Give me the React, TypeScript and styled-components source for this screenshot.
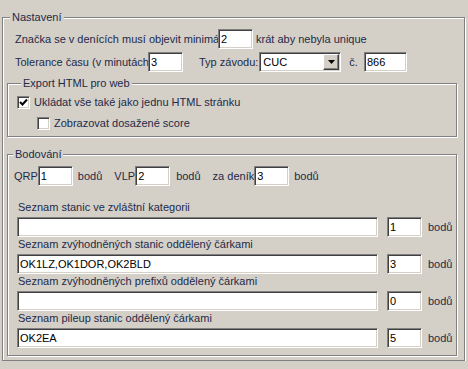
import styled, { createGlobalStyle } from 'styled-components';

const GlobalStyle = createGlobalStyle`
  html, body {
    margin: 0;
    background: #d4d0c8;
  }
  body {
    font-family: 'Liberation Sans', Arial, sans-serif;
    font-size: 11px;
    color: #1e2a48;
  }
`;

const Group = styled.fieldset<{ $mt?: number; $pad: string }>`
  margin: ${(p) => p.$mt ?? 0}px 0 0 0;
  padding: ${(p) => p.$pad};
  border: 1px solid #808080;
  box-shadow: inset 1px 1px 0 #fff, 1px 1px 0 #fff;
  min-width: 0;
`;

const Outer = styled(Group)`
  margin: 10px 3px 0 2px;
`;

const Legend = styled.legend<{ $ml: number }>`
  margin-left: ${(p) => p.$ml}px;
  padding: 0 2px;
  line-height: 14px;
  background: #d4d0c8;
`;

const Row = styled.div<{ $mt?: number; $pl?: number }>`
  display: flex;
  align-items: center;
  height: 20px;
  margin-top: ${(p) => p.$mt ?? 0}px;
  padding-left: ${(p) => p.$pl ?? 0}px;
  white-space: nowrap;
`;

// fixed-width label column; the original dialog cuts the label at the field
const Clip = styled.span<{ $w: number }>`
  display: block;
  width: ${(p) => p.$w}px;
  white-space: nowrap;
`;

const Text = styled.span<{ $ml?: number }>`
  margin-left: ${(p) => p.$ml ?? 0}px;
`;

const Field = styled.input<{ $w: number; $ml?: number }>`
  box-sizing: border-box;
  width: ${(p) => p.$w}px;
  height: 20px;
  margin: 0 0 0 ${(p) => p.$ml ?? 0}px;
  padding: 0 2px;
  background: #fff;
  border-style: solid;
  border-width: 1px;
  border-color: #808080 #fff #fff #808080;
  box-shadow: inset 1px 1px 0 #404040, inset -1px -1px 0 #d4d0c8;
  font-family: 'Liberation Sans', Arial, sans-serif;
  font-size: 11px;
  color: #000;
  outline: none;
`;

const Combo = styled.div<{ $w: number; $ml: number }>`
  box-sizing: border-box;
  display: flex;
  align-items: center;
  justify-content: space-between;
  width: ${(p) => p.$w}px;
  height: 20px;
  margin-left: ${(p) => p.$ml}px;
  padding: 0 1px 0 3px;
  background: #fff;
  border-style: solid;
  border-width: 1px;
  border-color: #808080 #fff #fff #808080;
  box-shadow: inset 1px 1px 0 #404040, inset -1px -1px 0 #d4d0c8;
  color: #000;
`;

const ComboButton = styled.div`
  box-sizing: border-box;
  display: flex;
  align-items: center;
  justify-content: center;
  width: 16px;
  height: 16px;
  background: #d4d0c8;
  border-style: solid;
  border-width: 1px;
  border-color: #fff #404040 #404040 #fff;
  box-shadow: inset -1px -1px 0 #808080;
`;

const CheckRow = styled.label<{ $indent: number; $mt?: number }>`
  display: flex;
  align-items: center;
  gap: 4px;
  height: 16px;
  margin: ${(p) => p.$mt ?? 0}px 0 0 ${(p) => p.$indent}px;
  white-space: nowrap;
`;

const Box = styled.span`
  box-sizing: border-box;
  display: flex;
  align-items: center;
  justify-content: center;
  width: 13px;
  height: 13px;
  background: #fff;
  border-style: solid;
  border-width: 1px;
  border-color: #808080 #fff #fff #808080;
  box-shadow: inset 1px 1px 0 #404040, inset -1px -1px 0 #d4d0c8;
`;

const ScoreRow = styled.div`
  display: flex;
  align-items: center;
  gap: 12px;
  height: 20px;
  margin: 5px 0 0 6px;
`;

const Cluster = styled.div`
  display: flex;
  align-items: center;
  white-space: nowrap;
`;

const ListItem = styled.div<{ $mt: number }>`
  margin: ${(p) => p.$mt}px 0 0 9px;
`;

const Caption = styled.div`
  height: 14px;
  line-height: 14px;
  margin: 0 0 3px 1px;
  white-space: nowrap;
`;

const Check = ({ on }: { on: boolean }) => (
  <Box>
    {on && (
      <svg width="9" height="9" viewBox="0 0 9 9">
        <path d="M1 4 L3.5 6.5 L8 1.5" fill="none" stroke="#000" strokeWidth="2" />
      </svg>
    )}
  </Box>
);

const lists = [
  { label: 'Seznam stanic ve zvláštní kategorii', text: '', pts: '1' },
  { label: 'Seznam zvýhodněných stanic oddělený čárkami', text: 'OK1LZ,OK1DOR,OK2BLD', pts: '3' },
  { label: 'Seznam zvýhodněných prefixů oddělený čárkami', text: '', pts: '0' },
  { label: 'Seznam pileup stanic oddělený čárkami', text: 'OK2EA', pts: '5' },
];

const App = () => {
  return (
    <>
      <GlobalStyle />
      <Outer $pad="0 7px 4px 4px">
        <Legend $ml={3}>Nastavení</Legend>
        <Row $mt={5} $pl={8}>
          <Clip $w={203}>Značka se v denících musí objevit minimá</Clip>
          <Field $w={35} readOnly value="2" />
          <Text $ml={3}>krát aby nebyla unique</Text>
        </Row>
        <Row $mt={3} $pl={8}>
          <Clip $w={133}>Tolerance času (v minutách</Clip>
          <Field $w={35} readOnly value="3" />
          <Text $ml={16}>Typ závodu:</Text>
          <Combo $w={82} $ml={1}>
            <span>CUC</span>
            <ComboButton>
              <svg width="7" height="4" viewBox="0 0 7 4">
                <path d="M0 0 H7 L3.5 4 Z" fill="#000" />
              </svg>
            </ComboButton>
          </Combo>
          <Text $ml={8}>č.</Text>
          <Field $w={43} $ml={6} readOnly value="866" />
        </Row>

        <Group $mt={4} $pad="4px 0 5px 9px">
          <Legend $ml={4}>Export HTML pro web</Legend>
          <CheckRow $indent={0}>
            <Check on />
            Ukládat vše také jako jednu HTML stránku
          </CheckRow>
          <CheckRow $indent={20} $mt={5}>
            <Check on={false} />
            Zobrazovat dosažené score
          </CheckRow>
        </Group>

        <Group $mt={10} $pad="0 0 7px 0">
          <Legend $ml={5}>Bodování</Legend>
          <ScoreRow>
            <Cluster>
              QRP
              <Field $w={35} readOnly value="1" />
              <Text $ml={5}>bodů</Text>
            </Cluster>
            <Cluster>
              VLP
              <Field $w={35} readOnly value="2" />
              <Text $ml={6}>bodů</Text>
            </Cluster>
            <Cluster>
              za deník
              <Field $w={35} readOnly value="3" />
              <Text $ml={5}>bodů</Text>
            </Cluster>
          </ScoreRow>
          {lists.map((l, i) => (
            <ListItem key={l.label} $mt={i === 0 ? 14 : 0}>
              <Caption>{l.label}</Caption>
              <Row>
                <Field $w={361} readOnly value={l.text} />
                <Field $w={35} $ml={9} readOnly value={l.pts} />
                <Text $ml={6}>bodů</Text>
              </Row>
            </ListItem>
          ))}
        </Group>
      </Outer>
    </>
  );
};

export default App;
